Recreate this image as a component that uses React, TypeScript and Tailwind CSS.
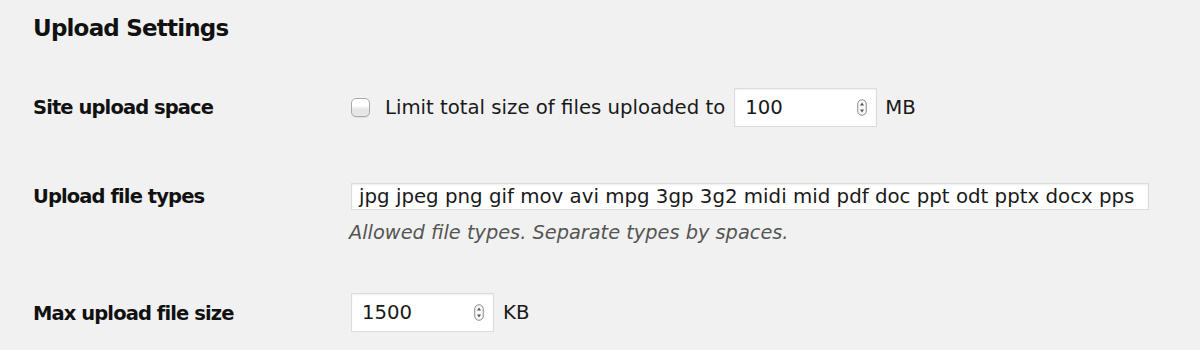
import React from "react";

function Spinner() {
  return (
    <svg width="10" height="17" viewBox="0 0 10 17" className="shrink-0">
      <rect x="0.75" y="0.75" width="8.5" height="15.5" rx="4.25" fill="#fafafa" stroke="#8a8a8a" strokeWidth="1" />
      <path d="M5 3.6 L7 6.4 L3 6.4 Z" fill="#555" />
      <path d="M5 13.4 L7 10.6 L3 10.6 Z" fill="#555" />
    </svg>
  );
}

function NumberBox({ value, width }: { value: string; width: string }) {
  return (
    <div
      className={`${width} h-[39px] bg-white border border-[#dcdcdc] shadow-[inset_0_1px_2px_rgba(0,0,0,0.07)] flex items-center pl-[10px] pr-[9px]`}
    >
      <span className="flex-1 text-[19.7px] text-[#1a1a1a]">{value}</span>
      <Spinner />
    </div>
  );
}

export default function App() {
  return (
    <div
      className="w-[1200px] h-[350px] bg-[#f1f1f1] text-[#1a1a1a] overflow-hidden pl-[33px] pt-[14px]"
      style={{ fontFamily: '"DejaVu Sans", sans-serif' }}
    >
      <h2 className="text-[23px] leading-[28px] font-bold tracking-[-0.8px] text-[#111]">Upload Settings</h2>

      {/* Row 1 */}
      <div className="flex mt-[46px]">
        <div className="w-[318px] h-[39px] flex items-center text-[19.5px] font-bold tracking-[-0.9px] text-[#111]">
          Site upload space
        </div>
        <div className="flex items-center h-[39px] text-[19.7px]">
          <div className="w-[19px] h-[19px] rounded-[5px] border border-[#a9a9a9] bg-gradient-to-b from-white from-40% to-[#e6e6e6] to-60% shadow-[0_1px_1px_rgba(0,0,0,0.08)]" />
          <span className="ml-[15px] mr-[9px]">Limit total size of files uploaded to</span>
          <NumberBox value="100" width="w-[143px]" />
          <span className="ml-[8px]">MB</span>
        </div>
      </div>

      {/* Row 2 */}
      <div className="flex mt-[56px]">
        <div className="w-[318px] h-[27px] flex items-center text-[19.5px] font-bold tracking-[-0.9px] text-[#111]">
          Upload file types
        </div>
        <div className="flex flex-col">
          <div className="w-[798px] h-[27px] bg-white border border-[#dcdcdc] shadow-[inset_0_1px_2px_rgba(0,0,0,0.07)] flex items-center pl-[7px] text-[19.8px] text-[#1a1a1a] whitespace-nowrap overflow-hidden">
            jpg jpeg png gif mov avi mpg 3gp 3g2 midi mid pdf doc ppt odt pptx docx pps
          </div>
          <div className="mt-[11px] -ml-[2px] h-[24px] leading-[24px] text-[19.35px] italic text-[#555]">
            Allowed file types. Separate types by spaces.
          </div>
        </div>
      </div>

      {/* Row 3 */}
      <div className="flex mt-[48px]">
        <div className="w-[318px] h-[39px] pt-[3px] flex items-center text-[19.5px] font-bold tracking-[-0.9px] text-[#111]">
          Max upload file size
        </div>
        <div className="flex items-center h-[39px] text-[19.7px]">
          <NumberBox value="1500" width="w-[143px]" />
          <span className="ml-[9px]">KB</span>
        </div>
      </div>
    </div>
  );
}
